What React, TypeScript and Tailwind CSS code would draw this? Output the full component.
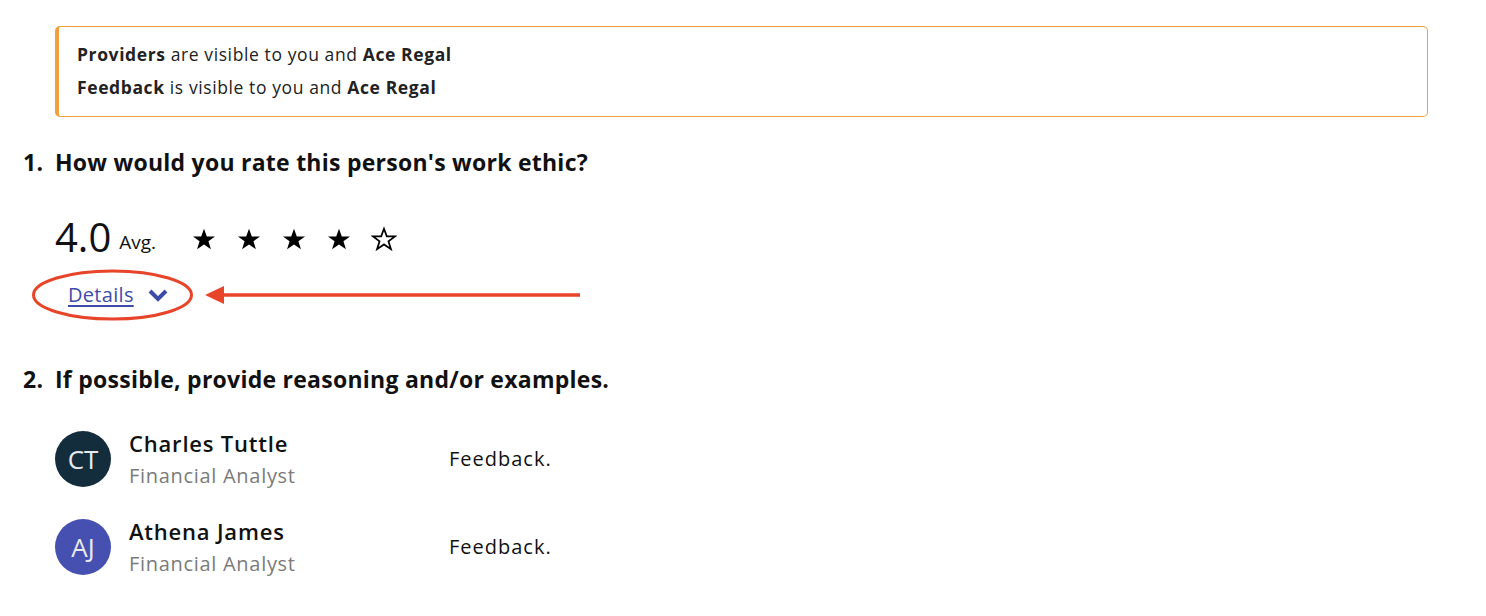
import React from "react";

const font = { fontFamily: "'Open Sans', Lato, sans-serif" };

function Star({ filled }: { filled: boolean }) {
  return (
    <svg width="26" height="26" viewBox="0 0 24 24">
      <path
        d="M12 2.5l2.6 7.1h7.6l-6.1 4.5 2.3 7.3L12 17l-6.4 4.4 2.3-7.3-6.1-4.5h7.6z"
        fill={filled ? "#000" : "none"}
        stroke="#000"
        strokeWidth={filled ? 0 : 1.6}
        strokeLinejoin="miter"
      />
    </svg>
  );
}

function Person({ initials, name, bg }: { initials: string; name: string; bg: string }) {
  return (
    <div className="flex items-center h-[88px]">
      <div className={`w-[56px] h-[56px] rounded-full flex items-center justify-center text-[26px] text-[#e8eaf0] ${bg}`}>
        {initials}
      </div>
      <div className="ml-[18px] w-[320px]">
        <div className="text-[22px] font-semibold text-[#111] leading-[30px] tracking-[0.8px]">{name}</div>
        <div className="text-[20px] text-[#7b7b7b] leading-[30px] mt-[3px] tracking-[0.7px]">Financial Analyst</div>
      </div>
      <div className="text-[20px] text-[#111] tracking-[1px]">Feedback.</div>
    </div>
  );
}

export default function App() {
  return (
    <div className="w-[1486px] h-[616px] bg-white overflow-hidden" style={font}>
      <div className="pt-[26px] pl-[55px] pr-[58px]">
        <div className="border border-[#f0a03c] border-l-4 rounded-[5px] pl-[18px] pt-[11px] pb-[12px] text-[17.5px] text-[#222] leading-[33px] tracking-[0.6px]">
          <div><b>Providers</b> are visible to you and <b>Ace Regal</b></div>
          <div><b>Feedback</b> is visible to you and <b>Ace Regal</b></div>
        </div>
      </div>

      <div className="pl-[23px] mt-[30px] flex text-[23px] font-bold text-[#111] leading-[30px] tracking-[0.25px]">
        <span className="w-[32px]">1.</span>
        <span>How would you rate this person's work ethic?</span>
      </div>

      <div className="pl-[55px] mt-[38px] flex items-end">
        <span className="text-[40px] leading-[44px] text-[#111]">4.0</span>
        <span className="text-[19px] ml-[8px] mb-[3px] text-[#111]">Avg.</span>
        <div className="flex gap-[19px] ml-[35px] mb-[7px]">
          <Star filled />
          <Star filled />
          <Star filled />
          <Star filled />
          <Star filled={false} />
        </div>
      </div>

      <div className="relative h-[56px] mt-[10px]">
        <div className="absolute left-[68px] top-[11px] flex items-center gap-[14px]">
          <span className="text-[20px] text-[#3d4ca8] underline underline-offset-[3px] tracking-[0.3px]">Details</span>
          <svg width="20" height="14" viewBox="0 0 20 14">
            <path d="M2 3 L10 11 L18 3" fill="none" stroke="#3d4ca8" strokeWidth="4" strokeLinejoin="miter" />
          </svg>
        </div>
        <svg className="absolute left-0 top-0" width="600" height="56" viewBox="0 0 600 56">
          <ellipse cx="112.5" cy="26" rx="79" ry="24" fill="none" stroke="#e8442a" strokeWidth="3" />
          <polygon points="205,26 224,17 224,35" fill="#e8442a" />
          <line x1="220" y1="26" x2="580" y2="26" stroke="#e8442a" strokeWidth="3.5" />
        </svg>
      </div>

      <div className="pl-[23px] mt-[39px] flex text-[23px] font-bold text-[#111] leading-[30px] tracking-[0.25px]">
        <span className="w-[32px]">2.</span>
        <span>If possible, provide reasoning and/or examples.</span>
      </div>

      <div className="pl-[55px] mt-[21px]">
        <Person initials="CT" name="Charles Tuttle" bg="bg-[#132d3d]" />
        <Person initials="AJ" name="Athena James" bg="bg-[#4650b0]" />
      </div>
    </div>
  );
}
